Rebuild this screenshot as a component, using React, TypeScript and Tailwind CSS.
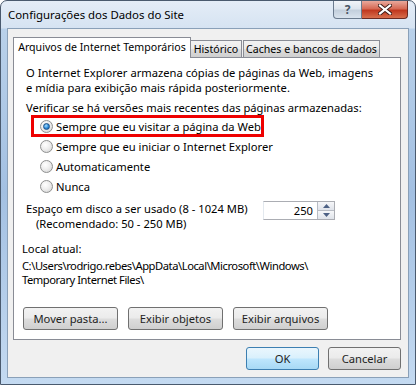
import React from 'react';

const btnBg =
  'bg-[linear-gradient(to_bottom,#f2f2f2_0%,#ebebeb_48%,#dddddd_52%,#cfcfcf_100%)]';

function Radio({ checked }: { checked?: boolean }) {
  return (
    <span className="flex h-[13px] w-[13px] shrink-0 items-center justify-center rounded-full border border-[#8e8f8f] bg-[radial-gradient(circle_at_40%_35%,#ffffff_0%,#eeeeee_45%,#cfcfcf_100%)]">
      {checked && (
        <span className="h-[7px] w-[7px] rounded-full border border-[#1b4f86] bg-[radial-gradient(circle_at_40%_35%,#a6dcff_0%,#2b8ad8_55%,#11509a_100%)]" />
      )}
    </span>
  );
}

function Button({ label, width, primary }: { label: string; width: string; primary?: boolean }) {
  return (
    <div
      className={`flex h-[23px] ${width} items-center justify-center rounded-[3px] border ${
        primary
          ? 'border-[#3c7fb1] bg-[linear-gradient(to_bottom,#eaf6fd_0%,#d9f0fc_48%,#bee6fd_52%,#a7d9f5_100%)]'
          : `border-[#707070] ${btnBg}`
      } whitespace-nowrap text-[#1e1e1e]`}
    >
      {label}
    </div>
  );
}

export default function App() {
  const options = [
    'Sempre que eu visitar a página da Web',
    'Sempre que eu iniciar o Internet Explorer',
    'Automaticamente',
    'Nunca',
  ];

  return (
    <div
      className="h-[385px] w-[416px] overflow-hidden whitespace-nowrap bg-white text-[11.2px] leading-[15px] text-black"
      style={{ fontFamily: '"Noto Sans", "Liberation Sans", sans-serif' }}
    >
      <div className="flex h-full flex-col rounded-t-[7px] border border-[#4a5a6e] bg-[linear-gradient(to_bottom,#e4edf7_0px,#d6e3f2_27px,#b9d1ea_28px,#a3c0e2_50%,#c4daf1_100%)]">
        {/* title bar */}
        <div className="flex h-[27px] shrink-0 items-start">
          <div className="pl-[7px] pt-[6px] text-[11.4px] text-black">Configurações dos Dados do Site</div>
          <div className="ml-auto mr-[7px] flex">
            <div className="flex h-[18px] w-[29px] items-center justify-center rounded-bl-[4px] border border-t-0 border-[#6b7b8e] bg-[linear-gradient(to_bottom,#f1f4f8_0%,#dde5ee_45%,#c3cfdc_55%,#d9e3ee_100%)] text-[12px] font-bold text-[#4a5563]">
              ?
            </div>
            <div className="flex h-[18px] w-[46px] items-center justify-center rounded-br-[4px] border border-l-0 border-t-0 border-[#6b2a22] bg-[linear-gradient(to_bottom,#e9a99c_0%,#d66a55_45%,#c0381f_55%,#d86f4d_100%)]">
              <svg width="14" height="11" viewBox="0 0 14 11">
                <path d="M2 1.5 L12 9.5 M12 1.5 L2 9.5" stroke="#3b1a16" strokeWidth="4" strokeLinecap="square" />
                <path d="M2 1.5 L12 9.5 M12 1.5 L2 9.5" stroke="#ffffff" strokeWidth="2.2" strokeLinecap="square" />
              </svg>
            </div>
          </div>
        </div>

        {/* client area */}
        <div className="mx-[6px] mb-[6px] flex flex-1 flex-col border border-[#8aa0b8] bg-[#f0f0f0] pl-[5px] pr-[7px] pt-[8px]">
          {/* tabs */}
          <div className="relative z-10 flex h-[20px] items-end text-[10.6px]">
            <div className="-mb-px flex h-[21px] w-[178px] items-start justify-center border border-b-0 border-[#898c95] bg-white pt-[2px]">
              Arquivos de Internet Temporários
            </div>
            <div className={`flex h-[17px] w-[51px] items-center justify-center border border-b-0 border-l-0 border-[#898c95] ${btnBg}`}>
              Histórico
            </div>
            <div className={`ml-px flex h-[17px] w-[137px] items-center justify-center border border-b-0 border-[#898c95] ${btnBg}`}>
              Caches e bancos de dados
            </div>
          </div>

          {/* panel */}
          <div className="flex h-[283px] flex-col border border-[#898c95] bg-white pl-[12px] pt-[7px]">
            <p>
              O Internet Explorer armazena cópias de páginas da Web, imagens
              <br />e mídia para exibição mais rápida posteriormente.
            </p>
            <p className="mt-[5px]">Verificar se há versões mais recentes das páginas armazenadas:</p>
            <div className="mt-[1px] flex flex-col">
              {options.map((o, i) => (
                <div key={o} className="relative flex h-[20px] items-center gap-[3px] pl-[14px]">
                  {i === 0 && (
                    <span className="absolute -top-px left-[5px] h-[22px] w-[233px] border-[3px] border-[#ee0000]" />
                  )}
                  <Radio checked={i === 0} />
                  <span>{o}</span>
                </div>
              ))}
            </div>

            <div className="mt-[5px] flex items-start">
              <div className="w-[237px]">
                <div>Espaço em disco a ser usado (8 - 1024 MB)</div>
                <div className="pl-[10px]">(Recomendado: 50 - 250 MB)</div>
              </div>
              <div className="flex h-[19px] w-[72px] border border-[#abadb3] border-l-[#e3e9ef] bg-white">
                <div className="flex flex-1 items-center justify-end pr-[4px]">250</div>
                <div className="flex w-[17px] flex-col border-l border-[#b8bcc4]">
                  <div className="flex flex-1 items-center justify-center border-b border-[#b8bcc4] bg-[linear-gradient(to_bottom,#f6f7f9,#dfe3ea)]">
                    <svg width="7" height="4" viewBox="0 0 7 4"><path d="M0 4 L3.5 0 L7 4 Z" fill="#4d6185" /></svg>
                  </div>
                  <div className="flex flex-1 items-center justify-center bg-[linear-gradient(to_bottom,#f6f7f9,#dfe3ea)]">
                    <svg width="7" height="4" viewBox="0 0 7 4"><path d="M0 0 L3.5 4 L7 0 Z" fill="#4d6185" /></svg>
                  </div>
                </div>
              </div>
            </div>

            <div className="-ml-[4px] mt-[10px]">Local atual:</div>
            <div className="-ml-[4px] mt-[3px] leading-[14px] tracking-[-0.45px]">
              C:\Users\rodrigo.rebes\AppData\Local\Microsoft\Windows\
              <br />
              Temporary Internet Files\
            </div>

            <div className="-ml-[3px] mt-[20px] flex gap-[10px]">
              <Button label="Mover pasta..." width="w-[95px]" />
              <Button label="Exibir objetos" width="w-[95px]" />
              <Button label="Exibir arquivos" width="w-[95px]" />
            </div>
          </div>

          {/* dialog buttons */}
          <div className="flex flex-1 items-center justify-end gap-[9px]">
            <Button label="OK" width="w-[73px]" primary />
            <Button label="Cancelar" width="w-[73px]" />
          </div>
        </div>
      </div>
    </div>
  );
}
